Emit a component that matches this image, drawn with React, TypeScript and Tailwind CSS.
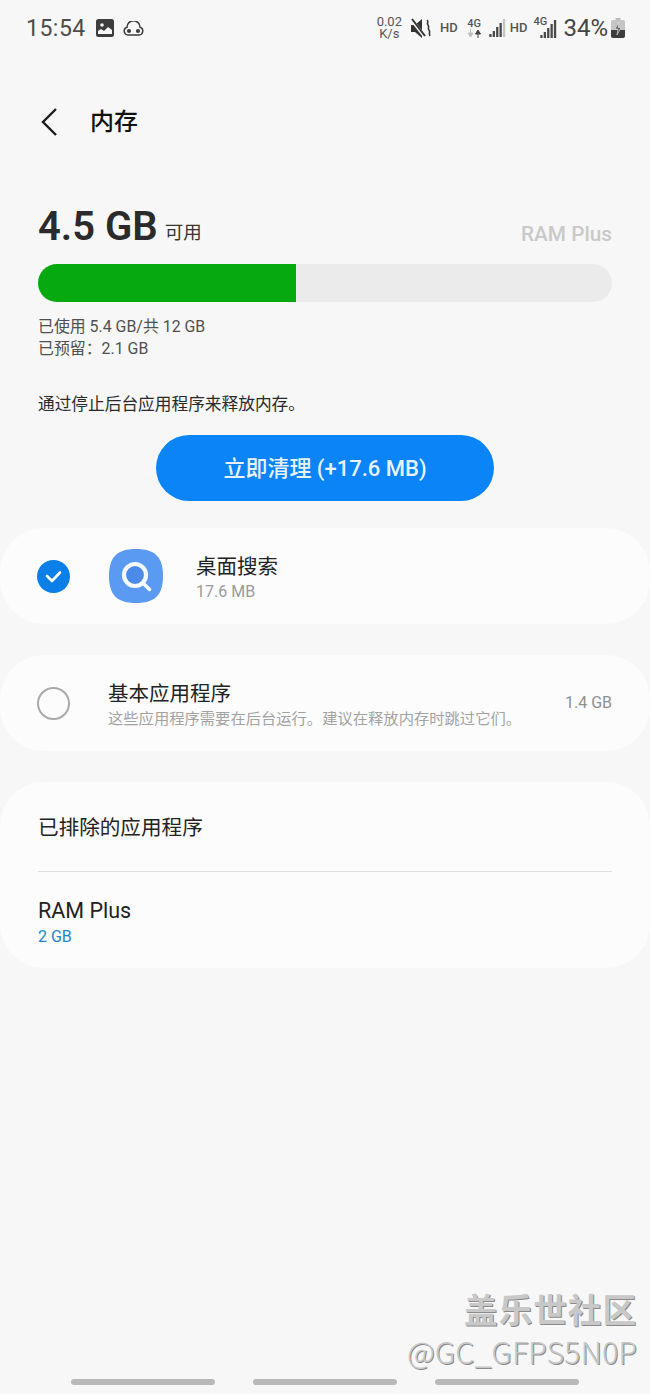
import React from "react";

const font = { fontFamily: '"Roboto","Noto Sans CJK SC",sans-serif' };

function Signal({ bars }: { bars: number }) {
  const hs = [3, 6, 10, 14, 18];
  return (
    <svg width="17" height="18" viewBox="0 0 17 18">
      {hs.map((v, i) => (
        <rect key={i} x={i * 3.4 + 0.3} y={18 - v} width="2.300" height={v} fill={i < bars ? "#4a4a4a" : "#c4c4c4"} />
      ))}
    </svg>
  );
}

function StatusBar() {
  return (
    <div className="flex h-[56px] items-center justify-between pl-[26px] pr-[25px] text-[#4d4d4d]">
      <div className="flex items-center">
        <span className="text-[23px] leading-none tracking-[0.5px]">15:54</span>
        <svg className="ml-[10px]" width="18" height="18" viewBox="0 0 18 18">
          <rect width="18" height="18" rx="2.500" fill="#3d3d3d" />
          <circle cx="6" cy="6" r="1.800" fill="#f7f7f7" />
          <path d="M2 15v-3l3-2 3 2 4-4 4 3v4z" fill="#f7f7f7" />
        </svg>
        <svg className="ml-[9px]" width="21" height="15" viewBox="0 0 21 15">
          <path d="M5 14a4 4 0 0 1-1-7.800 6.500 6.500 0 0 1 13 0A4 4 0 0 1 16 14z" fill="none" stroke="#3d3d3d" strokeWidth="1.500" />
          <circle cx="6" cy="10" r="2.100" fill="#3d3d3d" />
          <circle cx="15" cy="10" r="2.100" fill="#3d3d3d" />
        </svg>
      </div>
      <div className="flex items-center">
        <div className="flex flex-col items-center text-[13px] leading-[12.500px] text-[#555]">
          <span>0.02</span>
          <span>K/s</span>
        </div>
        <svg className="ml-[9px]" width="20" height="21" viewBox="0 0 20 21">
          <path d="M0 7h4l7-6v19l-7-6H0z" fill="#333" />
          <path d="M0 1l14 18" stroke="#f7f7f7" strokeWidth="3.500" />
          <path d="M1 1l13 17" stroke="#333" strokeWidth="2" />
          <path d="M16 2c2.500 2-1 3 1 5s-1 3 1 5-1 3 1 6" fill="none" stroke="#333" strokeWidth="1.600" />
        </svg>
        <span className="ml-[9px] text-[13px] font-medium text-[#555]">HD</span>
        <div className="ml-[9px] flex flex-col items-center text-[#555]">
          <span className="text-[11px] leading-[11px] font-medium">4G</span>
          <svg width="15" height="9" viewBox="0 0 15 9">
            <path d="M3.500 0v5M1 4l2.500 4L6 4z" fill="#bdbdbd" stroke="#bdbdbd" />
            <path d="M11 9V4M8.500 5L11 1l2.500 4z" fill="#444" stroke="#444" />
          </svg>
        </div>
        <div className="ml-[7px]"><Signal bars={4} /></div>
        <span className="ml-[4px] text-[13px] font-medium text-[#555]">HD</span>
        <div className="relative ml-[6px] h-[20px] w-[24px]">
          <span className="absolute left-0 top-[-2px] text-[11px] font-medium leading-[11px] text-[#555]">4G</span>
          <div className="absolute bottom-0 right-0"><Signal bars={5} /></div>
        </div>
        <span className="ml-[6px] text-[24px] leading-none text-[#444]">34%</span>
        <svg className="ml-[3px]" width="14" height="20" viewBox="0 0 14 20">
          <rect x="4.500" y="0" width="5" height="3" fill="#bbb" />
          <rect x="0" y="2" width="14" height="18" rx="2" fill="#c4c4c4" />
          <path d="M0 12h14v6a2 2 0 0 1-2 2H2a2 2 0 0 1-2-2z" fill="#3d3d3d" />
          <path d="M8 4L4 11h3l-1 6 4-7.500H7z" fill="#555" stroke="#eee" strokeWidth=".6" />
        </svg>
      </div>
    </div>
  );
}

export default function App() {
  return (
    <div style={font} className="relative flex h-[1394px] w-[650px] flex-col overflow-hidden bg-[#f7f7f7] text-[#1a1a1a]">
      <StatusBar />

      <div className="mt-[46px] flex h-[40px] items-center pl-[40px]">
        <svg className="-mt-[1px]" width="18" height="30" viewBox="0 0 18 30">
          <path d="M16 2L3 15l13 13" fill="none" stroke="#1c1c1c" strokeWidth="2.400" />
        </svg>
        <span className="ml-[32px] text-[24px] font-medium leading-none text-[#111]">内存</span>
      </div>

      <div className="mt-[62px] flex h-[46px] items-center justify-between px-[38px]">
        <div className="flex items-center">
          <span className="text-[40px] font-semibold leading-[46px] text-[#2b2b2b]">4.5 GB</span>
          <span className="ml-[7px] mt-[12px] text-[18.500px] leading-[24px] text-[#333]">可用</span>
        </div>
        <span className="mt-[13px] text-[20.800px] font-medium leading-[24px] text-[#c9c9c9]">RAM Plus</span>
      </div>

      <div className="mx-[38px] mt-[14px] h-[38px] overflow-hidden rounded-full bg-[#ebebeb]">
        <div className="h-full w-[258px] bg-[#06a90f]" />
      </div>

      <div className="mt-[14px] px-[38px] text-[15.900px] leading-[22px] text-[#505050]">
        <div>已使用 5.4 GB/共 12 GB</div>
        <div>已预留：2.1 GB</div>
      </div>

      <div className="mt-[34px] px-[38px] text-[16.700px] leading-[22px] text-[#2a2a2a]">通过停止后台应用程序来释放内存。</div>

      <div className="mt-[19px] flex justify-center">
        <div className="flex h-[66px] w-[338px] items-center justify-center rounded-full bg-[#0a84f6] text-[22px] font-medium text-[#e8f3ff]">
          立即清理 (+17.6 MB)
        </div>
      </div>

      <div className="mt-[27px] flex h-[96px] items-center rounded-[44px] bg-[#fcfcfc] pl-[37px]">
        <div className="flex h-[33px] w-[33px] items-center justify-center rounded-full bg-[#0a7fe8]">
          <svg width="21" height="17" viewBox="0 0 21 17">
            <path d="M4 8l5 5 8-8.500" fill="none" stroke="#fff" strokeWidth="2.600" strokeLinecap="round" strokeLinejoin="round" />
          </svg>
        </div>
        <svg className="ml-[39px]" width="54" height="54" viewBox="0 0 54 54">
          <path d="M27 0C46 0 54 8 54 27S46 54 27 54 0 46 0 27 8 0 27 0z" fill="#5a9af2" />
          <circle cx="26" cy="26" r="11" fill="#4b8ae6" stroke="#f4f8ff" strokeWidth="4.200" />
          <path d="M34.500 34.500l6 6" stroke="#f4f8ff" strokeWidth="3.500" strokeLinecap="round" />
        </svg>
        <div className="ml-[33px] pt-[3px]">
          <div className="text-[20.500px] leading-[28px] text-[#222]">桌面搜索</div>
          <div className="text-[16px] leading-[22px] text-[#9a9a9a]">17.6 MB</div>
        </div>
      </div>

      <div className="mt-[31px] flex h-[96px] items-center rounded-[44px] bg-[#fcfcfc] pl-[37px] pr-[38px]">
        <div className="h-[33px] w-[33px] rounded-full border-2 border-[#a9a9a9]" />
        <div className="ml-[38px] flex-1 pt-[3px]">
          <div className="text-[20.500px] leading-[28px] text-[#222]">基本应用程序</div>
          <div className="text-[15.300px] leading-[22px] text-[#a3a3a3]">这些应用程序需要在后台运行。建议在释放内存时跳过它们。</div>
        </div>
        <span className="text-[16px] text-[#8f8f8f]">1.4 GB</span>
      </div>

      <div className="mt-[31px] rounded-[44px] bg-[#fcfcfc] px-[38px]">
        <div className="flex h-[89px] items-center pt-[4px] text-[20.600px] text-[#222]">已排除的应用程序</div>
        <div className="h-px bg-[#dedede]" />
        <div className="flex h-[96px] flex-col justify-center pt-[4px]">
          <div className="text-[21.500px] leading-[28px] text-[#222]">RAM Plus</div>
          <div className="text-[16px] leading-[23px] text-[#1f86c9]">2 GB</div>
        </div>
      </div>

      <div style={{ fontFamily: '"Noto Sans CJK SC","Noto Sans",sans-serif' }} className="absolute right-[13px] top-[1287px] flex flex-col items-end text-[#c8c8c8] [text-shadow:1px_1px_0_#8a8a8a]">
        <span className="text-[33.600px] font-bold leading-[44px] tracking-[1px]">盖乐世社区</span>
        <span className="text-[30.500px] leading-[40px] font-light">@GC_GFPS5N0P</span>
      </div>

      <div className="mt-auto mb-[9px] flex justify-center gap-[38px]">
        <div className="h-[6px] w-[144px] rounded-full bg-[#b9b9b9]" />
        <div className="h-[6px] w-[144px] rounded-full bg-[#b9b9b9]" />
        <div className="h-[6px] w-[144px] rounded-full bg-[#b9b9b9]" />
      </div>
    </div>
  );
}
